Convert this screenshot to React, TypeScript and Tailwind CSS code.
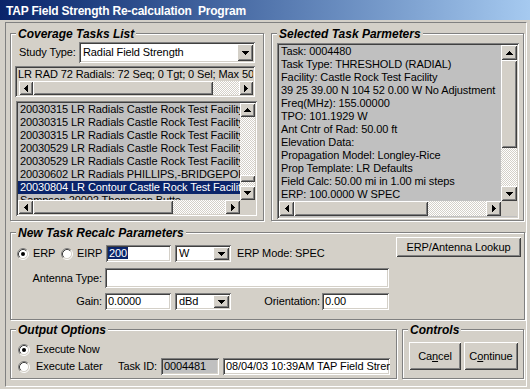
import React from 'react';

const SUNKEN =
  'shadow-[inset_1px_1px_0_#808080,inset_-1px_-1px_0_#ffffff,inset_2px_2px_0_#404040,inset_-2px_-2px_0_#d4d0c8]';
const RAISED =
  'shadow-[inset_1px_1px_0_#ffffff,inset_-1px_-1px_0_#404040,inset_2px_2px_0_#d4d0c8,inset_-2px_-2px_0_#808080]';
const CHECKER =
  'bg-[image:repeating-conic-gradient(#d4d0c8_0_25%,#ffffff_0_50%)] bg-[length:2px_2px]';

type Dir = 'up' | 'down' | 'left' | 'right';

const arrowPaths: Record<Dir, { w: number; h: number; d: string }> = {
  up: { w: 7, h: 4, d: 'M3 0h1v1h1v1h1v1h1v1H0V3h1V2h1V1h1z' },
  down: { w: 7, h: 4, d: 'M0 0h7v1H6v1H5v1H4v1H3V3H2V2H1V1H0z' },
  left: { w: 4, h: 7, d: 'M3 0h1v7H3V6H2V5H1V4H0V3h1V2h1V1h1z' },
  right: { w: 4, h: 7, d: 'M0 0h1v1h1v1h1v1h1v1H3v1H2v1H1v1H0z' },
};

const ScrollBtn = ({ dir, className = '' }: { dir: Dir; className?: string }) => {
  const a = arrowPaths[dir];
  return (
    <div className={`${RAISED} bg-[#d4d0c8] flex items-center justify-center shrink-0 ${className}`}>
      <svg width={a.w} height={a.h} viewBox={`0 0 ${a.w} ${a.h}`} shapeRendering="crispEdges">
        <path d={a.d} fill="#000" />
      </svg>
    </div>
  );
};

const VScroll = ({ className, arrow, before, thumb }: { className: string; arrow: string; before: string; thumb: string }) => (
  <div className={`flex flex-col shrink-0 ${className}`}>
    <ScrollBtn dir="up" className={arrow} />
    <div className={`${CHECKER} shrink-0 ${before}`} />
    <div className={`${RAISED} bg-[#d4d0c8] shrink-0 ${thumb}`} />
    <div className={`${CHECKER} flex-1`} />
    <ScrollBtn dir="down" className={arrow} />
  </div>
);

const HScroll = ({ className, arrow, thumb }: { className: string; arrow: string; thumb: string }) => (
  <div className={`flex ${className}`}>
    <ScrollBtn dir="left" className={arrow} />
    <div className={`${RAISED} bg-[#d4d0c8] shrink-0 ${thumb}`} />
    <div className={`${CHECKER} flex-1`} />
    <ScrollBtn dir="right" className={arrow} />
  </div>
);

const Radio = ({ checked }: { checked?: boolean }) => (
  <svg width="12" height="12" viewBox="0 0 12 12" className="shrink-0">
    <circle cx="6" cy="6" r="4.5" fill="#fff" />
    <path d="M2.11 9.89A5.5 5.5 0 0 1 9.89 2.11" stroke="#808080" fill="none" />
    <path d="M9.89 2.11A5.5 5.5 0 0 1 2.11 9.89" stroke="#fff" fill="none" />
    <path d="M2.82 9.18A4.5 4.5 0 0 1 9.18 2.82" stroke="#404040" fill="none" />
    <path d="M9.18 2.82A4.5 4.5 0 0 1 2.82 9.18" stroke="#d4d0c8" fill="none" />
    {checked && <circle cx="6" cy="6" r="2" fill="#000" />}
  </svg>
);

const Field = ({ className, children }: { className: string; children?: React.ReactNode }) => (
  <div className={`${SUNKEN} shrink-0 pl-[3px] pt-[2px] leading-[13px] whitespace-nowrap overflow-hidden ${className}`}>
    {children}
  </div>
);

const Combo = ({ className, value }: { className: string; value: string }) => (
  <div className={`${SUNKEN} bg-white shrink-0 flex p-[2px] ${className}`}>
    <div className="flex-1 pl-[2px] leading-[13px] whitespace-nowrap overflow-hidden self-center">{value}</div>
    <ScrollBtn dir="down" className="w-[16px]" />
  </div>
);

const Button = ({ className, children }: { className: string; children: React.ReactNode }) => (
  <div className={`${RAISED} bg-[#d4d0c8] shrink-0 flex items-center justify-center ${className}`}>{children}</div>
);

const Group = ({ title, className, children }: { title: string; className: string; children?: React.ReactNode }) => (
  <div className={`relative shrink-0 border border-[#808080] shadow-[inset_1px_1px_0_#ffffff,1px_1px_0_#ffffff] ${className}`}>
    <span className="absolute -top-[7px] left-[5px] px-[2px] bg-[#d4d0c8] font-bold italic text-[12px] tracking-normal leading-[14px] whitespace-nowrap">
      {title}
    </span>
    {children}
  </div>
);

const tasks = [
  '20030315 LR Radials Castle Rock Test Facility',
  '20030315 LR Radials Castle Rock Test Facility',
  '20030315 LR Radials Castle Rock Test Facility',
  '20030529 LR Radials Castle Rock Test Facility',
  '20030529 LR Radials Castle Rock Test Facility',
  '20030602 LR Radials PHILLIPS,-BRIDGEPORT',
  '20030804 LR Contour Castle Rock Test Facility',
  'Sampson 20002 Thompson Butte',
];

const params = [
  'Task: 0004480',
  'Task Type: THRESHOLD (RADIAL)',
  'Facility: Castle Rock Test Facility',
  '39 25 39.00 N 104 52 0.00 W No Adjustment',
  'Freq(MHz): 155.00000',
  'TPO: 101.1929 W',
  'Ant Cntr of Rad: 50.00 ft',
  'Elevation Data:',
  'Propagation Model: Longley-Rice',
  'Prop Template: LR Defaults',
  'Field Calc: 50.00 mi in 1.00 mi steps',
  'ERP: 100.0000 W SPEC',
];

export default function App() {
  return (
    <div className="w-[530px] h-[389px] bg-[#d4d0c8] flex flex-col font-['Liberation_Sans',Arial,sans-serif] text-[11px] tracking-[-0.1px] text-black overflow-hidden">
      <div className="h-[20px] shrink-0 bg-linear-to-r from-[#0a246a] to-[#a6caf0] text-white font-bold text-[12px] tracking-[-0.2px] leading-[17px] pt-[3px] pl-[6px] whitespace-nowrap">
        TAP Field Strength Re-calculation{'\u00a0'} Program
      </div>
      <div className="flex-1 flex pl-[5px] pr-[3px] pt-[2px] pb-[2px]">
        <div className="flex-1 flex flex-col border border-t-[#808080] border-l-[#808080] border-b-white border-r-white pl-[4px] pt-[10px]">
          {/* top row */}
          <div className="flex gap-[7px]">
            <Group title="Coverage Tasks List" className="w-[254px] h-[188px] pt-[8px] pl-[4px]">
              <div className="flex items-center ml-[4px] h-[21px]">
                <span className="w-[60px] shrink-0">Study Type:</span>
                <Combo className="w-[176px] h-[21px]" value="Radial Field Strength" />
              </div>
              <div className={`${SUNKEN} mt-[3px] w-[240px] h-[31px] p-[2px] flex flex-col`}>
                <div className="h-[13px] leading-[13px] pl-[1px] whitespace-nowrap overflow-hidden">
                  LR RAD 72 Radials: 72 Seq; 0 Tgt; 0 Sel; Max 50 Radials
                </div>
                <div className="pl-[2px] h-[14px] flex">
                  <HScroll className="flex-1" arrow="w-[14px]" thumb="w-[180px]" />
                </div>
              </div>
              <div className={`${SUNKEN} mt-[4px] ml-[1px] w-[241px] h-[115px] p-[2px] bg-[#c0c0c0] flex flex-col`}>
                <div className="flex h-[97px]">
                  <div className="flex-1 overflow-hidden">
                    {tasks.map((t, i) => (
                      <div
                        key={i}
                        className={`h-[13px] leading-[13px] pl-[2px] whitespace-nowrap ${i === 6 ? 'bg-[#0a246a] text-white' : ''}`}
                      >
                        {t}
                      </div>
                    ))}
                  </div>
                  <VScroll className="w-[15px]" arrow="h-[14px]" before="h-[58px]" thumb="h-[7px]" />
                </div>
                <div className="flex h-[14px]">
                  <HScroll className="flex-1" arrow="w-[15px]" thumb="w-[140px]" />
                  <div className="w-[15px] shrink-0 bg-[#d4d0c8]" />
                </div>
              </div>
            </Group>

            <Group title="Selected Task Parmeters" className="w-[253px] h-[188px] pt-[9px] pl-[5px]">
              <div className={`${SUNKEN} w-[242px] h-[176px] p-[2px] bg-[#c0c0c0] flex flex-col`}>
                <div className="flex h-[156px]">
                  <div className="flex-1 overflow-hidden pl-[2px]">
                    {params.map((p, i) => (
                      <div key={i} className="h-[13px] leading-[13px] whitespace-nowrap">
                        {p}
                      </div>
                    ))}
                  </div>
                  <VScroll className="w-[16px]" arrow="h-[15px]" before="h-0" thumb="h-[88px]" />
                </div>
                <div className="flex h-[15px]">
                  <HScroll className="flex-1" arrow="w-[15px]" thumb="w-[134px]" />
                  <div className="w-[16px] shrink-0 bg-[#d4d0c8]" />
                </div>
              </div>
            </Group>
          </div>

          {/* new task parameters */}
          <Group title="New Task Recalc Parameters" className="mt-[11px] w-[515px] h-[88px] flex items-start">
            <div className="pl-[6px] pt-[12px]">
              <div className="flex items-center h-[17px]">
                <Radio checked />
                <span className="w-[32px] pl-[4px] shrink-0">ERP</span>
                <Radio />
                <span className="w-[33px] pl-[4px] shrink-0">EIRP</span>
                <Field className="w-[65px] h-[17px] bg-white !pl-[2px]">
                  <span className="bg-[#0a246a] text-white px-[1px]">200</span>
                </Field>
                <Combo className="ml-[4px] w-[56px] h-[17px]" value="W" />
                <span className="ml-[6px] whitespace-nowrap">ERP Mode: SPEC</span>
              </div>
              <div className="flex items-center h-[20px] mt-[6px]">
                <span className="w-[88px] shrink-0 text-right pr-[3px]">Antenna Type:</span>
                <Field className="w-[284px] h-[20px] bg-white" />
              </div>
              <div className="flex items-center h-[17px] mt-[5px]">
                <span className="w-[88px] shrink-0 text-right pr-[3px]">Gain:</span>
                <Field className="w-[66px] h-[17px] bg-white">0.0000</Field>
                <Combo className="ml-[4px] w-[56px] h-[17px]" value="dBd" />
                <span className="w-[91px] shrink-0 text-right pr-[2px]">Orientation:</span>
                <Field className="w-[67px] h-[17px] bg-white">0.00</Field>
              </div>
            </div>
            <Button className="ml-auto mt-[4px] mr-[3px] w-[125px] h-[20px]">ERP/Antenna Lookup</Button>
          </Group>

          {/* bottom row */}
          <div className="flex gap-[5px] mt-[9px]">
            <Group title="Output Options" className="w-[387px] h-[50px] pl-[7px] pt-[13px]">
              <div className="flex items-center h-[13px]">
                <Radio checked />
                <span className="pl-[6px]">Execute Now</span>
              </div>
              <div className="flex items-center h-[17px] mt-[2px]">
                <Radio />
                <span className="w-[88px] pl-[6px] shrink-0">Execute Later</span>
                <span className="w-[43px] shrink-0">Task ID:</span>
                <Field className="w-[58px] h-[17px] bg-[#c0c0c0]">0004481</Field>
                <Field className="ml-[4px] w-[167px] h-[17px] bg-white">
                  08/04/03 10:39AM TAP Field Strength Re-calculation
                </Field>
              </div>
            </Group>
            <Group title="Controls" className="w-[122px] h-[50px] pl-[6px] pt-[12px] flex items-start gap-[3px]">
              <Button className="w-[52px] h-[28px]">
                <span>
                  Ca<u>n</u>cel
                </span>
              </Button>
              <Button className="w-[54px] h-[28px]">
                <span>
                  C<u>o</u>ntinue
                </span>
              </Button>
            </Group>
          </div>
        </div>
      </div>
    </div>
  );
}
